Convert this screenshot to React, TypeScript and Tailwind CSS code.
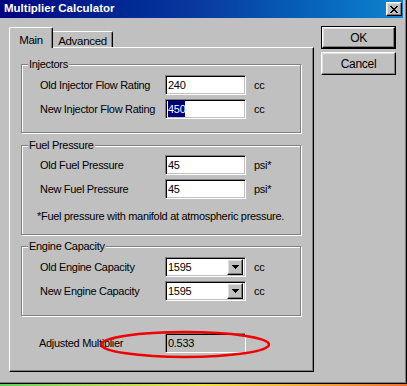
import React from "react";

const font = "font-['Liberation_Sans',Arial,sans-serif]";
const sunken =
  "border border-t-[#808080] border-l-[#808080] border-b-white border-r-white shadow-[inset_1px_1px_0_#000,inset_-1px_-1px_0_#c0c0c0]";
const raised =
  "border border-t-white border-l-white border-b-black border-r-black shadow-[inset_-1px_-1px_0_#808080,inset_1px_1px_0_#dfdfdf]";

function Group({ title, className, children }: { title: string; className?: string; children: React.ReactNode }) {
  return (
    <div
      className={`relative w-[280px] border border-[#808080] shadow-[1px_1px_0_#fff,inset_1px_1px_0_#fff] pl-[18px] ${className ?? ""}`}
    >
      <span className="absolute -top-[8px] left-[6px] bg-[#c0c0c0] px-px leading-[14px]">{title}</span>
      {children}
    </div>
  );
}

function Row({ label, children, unit }: { label: string; children: React.ReactNode; unit: string }) {
  return (
    <div className="flex items-center h-[20px]">
      <span className="w-[125px] shrink-0">{label}</span>
      {children}
      <span className="ml-[8px]">{unit}</span>
    </div>
  );
}

function Field({ value, selected }: { value: string; selected?: boolean }) {
  return (
    <div className={`w-[81px] h-[20px] bg-white ${sunken} flex items-center pl-[2px]`}>
      {selected ? <span className="bg-[#000080] text-white leading-[16px]">{value}</span> : <span>{value}</span>}
    </div>
  );
}

function Combo({ value }: { value: string }) {
  return (
    <div className={`w-[81px] h-[20px] bg-white ${sunken} flex items-center pl-[2px] pr-[2px]`}>
      <span className="flex-1">{value}</span>
      <div className={`w-[16px] h-[16px] bg-[#c0c0c0] ${raised} flex items-center justify-center`}>
        <svg width="7" height="4" viewBox="0 0 7 4">
          <path d="M0 0h7v1H0zM1 1h5v1H1zM2 2h3v1H2zM3 3h1v1H3z" fill="#000" />
        </svg>
      </div>
    </div>
  );
}

export default function App() {
  return (
    <div className={`relative w-[407px] h-[386px] bg-[#c0c0c0] text-black text-[11px] tracking-[-0.3px] ${font} flex flex-col overflow-hidden`}>
      <div className="h-[384px] flex flex-col border-r border-b border-black shadow-[inset_-1px_-1px_0_#808080]">
        <div className="h-[18px] mr-[3px] shrink-0 flex items-center justify-between bg-gradient-to-r from-[#000080] via-[#0a3aa0] to-[#1084d0] pl-[4px] pr-[1px]">
          <span className="text-white font-bold text-[11.5px] tracking-normal">Multiplier Calculator</span>
          <div className={`w-[16px] h-[14px] bg-[#c0c0c0] ${raised} flex items-center justify-center`}>
            <svg width="8" height="7" viewBox="0 0 8 7">
              <path d="M0 0L7 7M1 0L8 7M7 0L0 7M8 0L1 7" stroke="#000" strokeWidth="1" />
            </svg>
          </div>
        </div>

        <div className="flex">
          <div className="ml-[9px] mt-[9px] w-[305px]">
            <div className="flex items-end h-[20px]">
              <div className="relative z-10 w-[44px] h-[21px] -mb-px bg-[#c0c0c0] border-l border-t border-white border-r border-r-black rounded-tl-[2px] rounded-tr-[2px] shadow-[inset_-1px_0_0_#808080] flex justify-center pt-[4px] text-[11.5px]">
                Main
              </div>
              <div className="w-[60px] h-[16px] bg-[#c0c0c0] border-t border-white border-r border-r-black rounded-tr-[2px] shadow-[inset_-1px_0_0_#808080] flex justify-center pt-[1px] text-[11.5px]">
                Advanced
              </div>
            </div>
            <div className="h-[325px] border-t border-l border-white border-r border-b border-r-black border-b-black shadow-[inset_-1px_-1px_0_#808080] pl-[11px] pt-[16px]">
              <Group title="Injectors" className="pt-[10px] pb-[13px]">
                <div className="flex flex-col gap-[4px]">
                  <Row label="Old Injector Flow Rating" unit="cc">
                    <Field value="240" />
                  </Row>
                  <Row label="New Injector Flow Rating" unit="cc">
                    <Field value="450" selected />
                  </Row>
                </div>
              </Group>
              <Group title="Fuel Pressure" className="mt-[12px] pt-[9px] pb-[11px]">
                <div className="flex flex-col gap-[4px]">
                  <Row label="Old Fuel Pressure" unit="psi*">
                    <Field value="45" />
                  </Row>
                  <Row label="New Fuel Pressure" unit="psi*">
                    <Field value="45" />
                  </Row>
                </div>
                <div className="mt-[10px] h-[14px] -ml-[3px] leading-[14px]">
                  *Fuel pressure with manifold at atmospheric pressure.
                </div>
              </Group>
              <Group title="Engine Capacity" className="mt-[11px] pt-[10px] pb-[14px]">
                <div className="flex flex-col gap-[4px]">
                  <Row label="Old Engine Capacity" unit="cc">
                    <Combo value="1595" />
                  </Row>
                  <Row label="New Engine Capacity" unit="cc">
                    <Combo value="1595" />
                  </Row>
                </div>
              </Group>
              <div className="mt-[17px] pl-[18px] flex items-center h-[20px]">
                <span className="w-[126px] shrink-0">Adjusted Multiplier</span>
                <div className={`w-[81px] h-[20px] ${sunken} flex items-center pl-[2px]`}>0.533</div>
              </div>
            </div>
          </div>

          <div className="ml-[7px] mt-[8px] flex flex-col gap-[3px]">
            <div className="w-[75px] h-[23px] border border-black">
              <div className={`w-full h-full ${raised} flex items-center justify-center text-[12px]`}>OK</div>
            </div>
            <div className={`w-[75px] h-[23px] ${raised} flex items-center justify-center text-[12px]`}>Cancel</div>
          </div>
        </div>
      </div>
      <div className="h-[2px] bg-gradient-to-r from-[#60d060] via-[#f0e040] to-[#f07030]" />

      <svg className="absolute left-[99px] top-[330px]" width="172" height="29" viewBox="0 0 172 29">
        <ellipse cx="86" cy="14.5" rx="84" ry="12.5" fill="none" stroke="#f00000" strokeWidth="2.5" />
      </svg>
    </div>
  );
}
